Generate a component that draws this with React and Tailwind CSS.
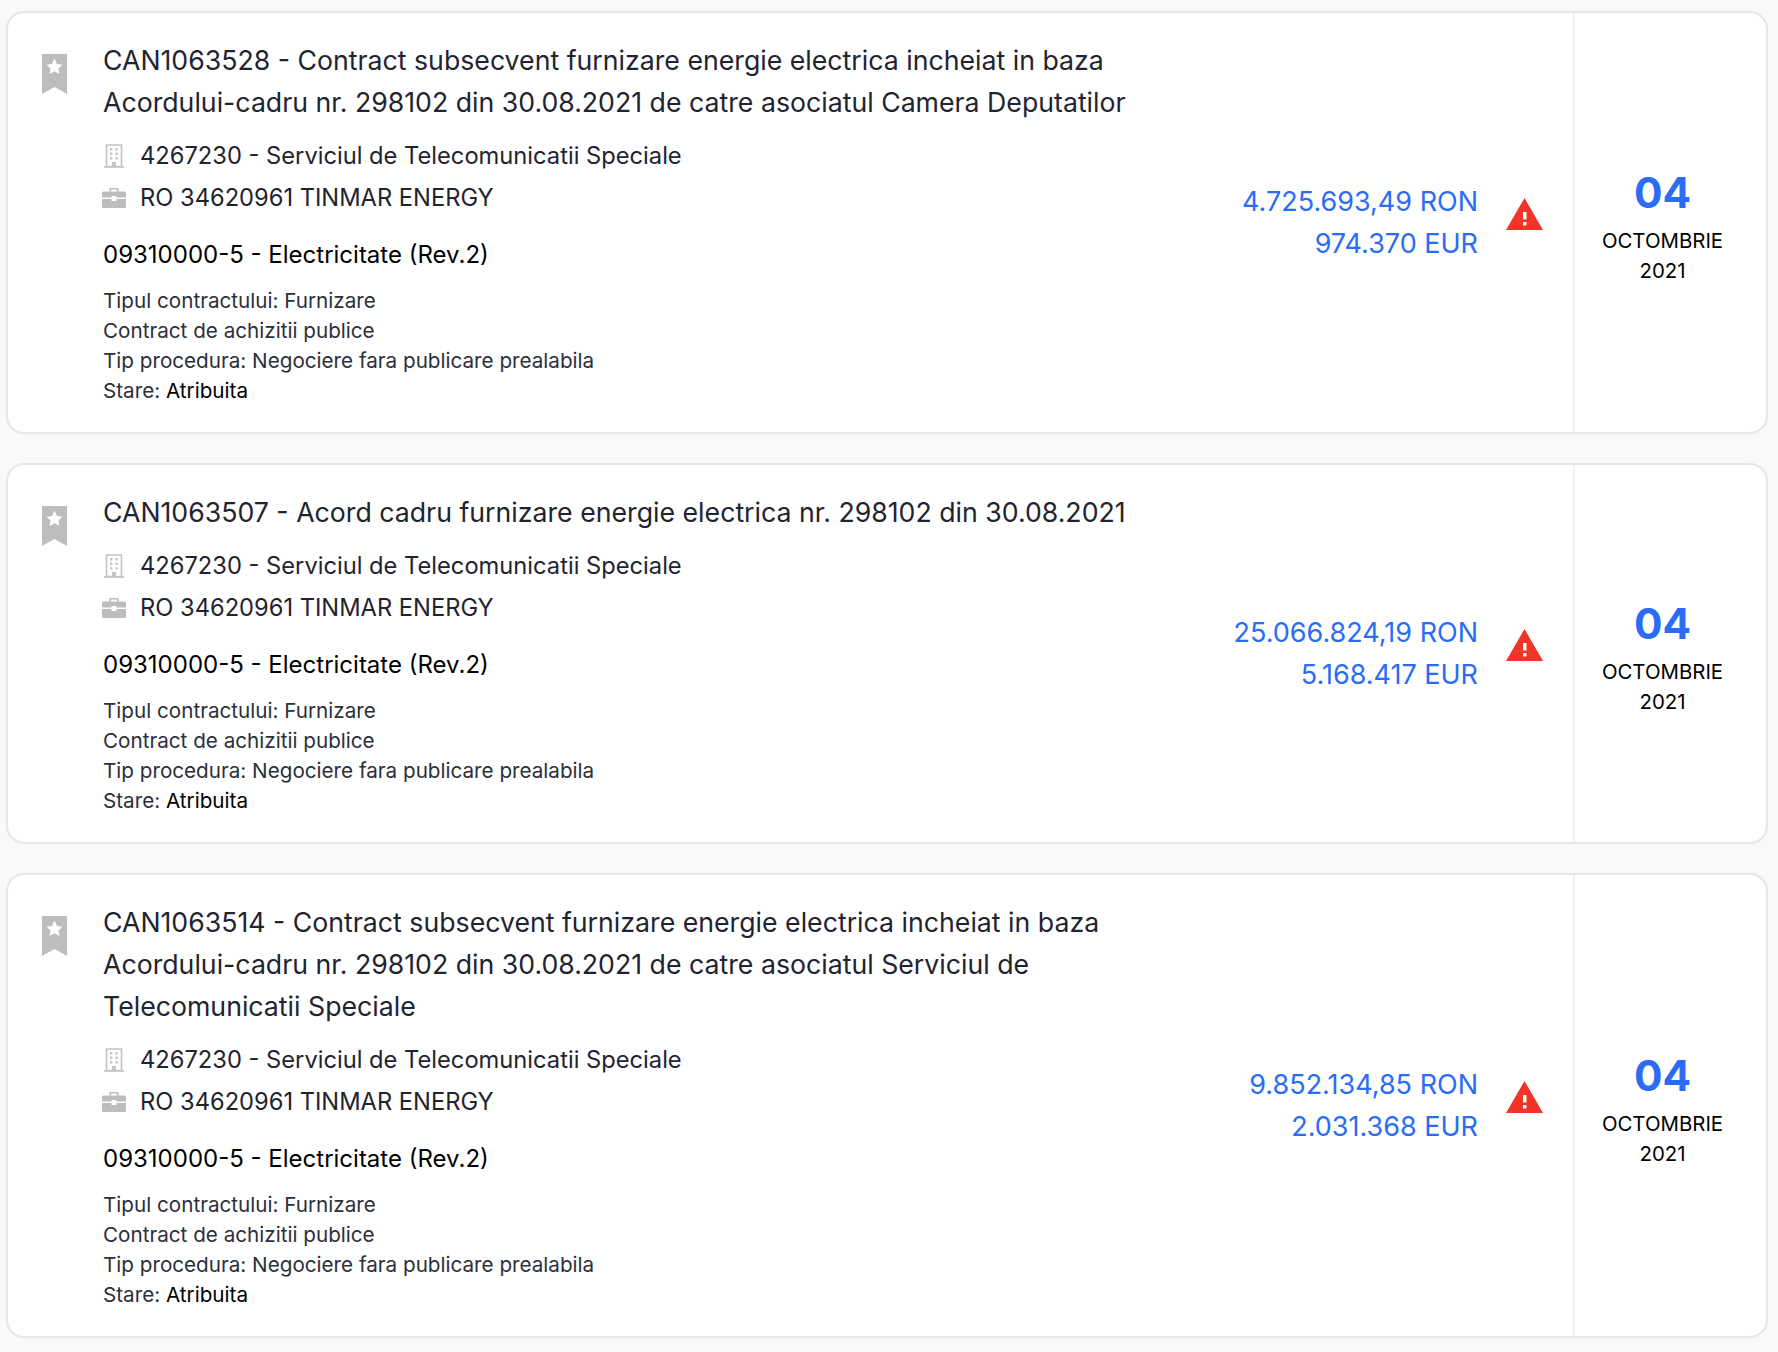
const Bookmark = () => (
  <svg width="25" height="40" viewBox="0 0 25 40" className="block">
    <path d="M0 0H25V40L12.5 33L0 40Z" fill="#bdbdbd" />
    <path d="M12.5 4.5L15 10L20.500 10.700L16.400 14.500L17.500 20L12.500 17.300L7.500 20L8.600 14.500L4.500 10.700L10 10Z" fill="#fff" />
  </svg>
);

const Building = () => (
  <svg width="20" height="24" viewBox="0 0 20 24" className="block">
    <path d="M2.5 1H17.5V22.5H2.5Z" fill="none" stroke="#c4c4c4" strokeWidth="1.6" />
    <path d="M0 23H20" stroke="#c4c4c4" strokeWidth="1.6" />
    <path d="M6 4h2.4v2.4H6zM11.4 4h2.4v2.4h-2.4zM6 8.6h2.4V11H6zM11.4 8.6h2.4V11h-2.4zM6 13.2h2.4v2.4H6zM11.4 13.2h2.4v2.4h-2.4z" fill="#c4c4c4" />
    <path d="M8 18h4v4.5H8z" fill="#c4c4c4" />
  </svg>
);

const Briefcase = () => (
  <svg width="24" height="20" viewBox="0 0 24 20" className="block">
    <path d="M8 3.5V2a1.5 1.5 0 0 1 1.5-1.5h5A1.5 1.5 0 0 1 16 2v1.5" fill="none" stroke="#bdbdbd" strokeWidth="1.8" />
    <path d="M1.5 3.5H22.500A1.5 1.5 0 0 1 24 5V9.500H14.500V8H9.500V9.500H0V5A1.500 1.500 0 0 1 1.500 3.500Z" fill="#bdbdbd" />
    <path d="M0 11H9.500V13H14.500V11H24V18.500A1.500 1.500 0 0 1 22.500 20H1.500A1.500 1.500 0 0 1 0 18.500Z" fill="#bdbdbd" />
  </svg>
);

const Warning = () => (
  <svg width="37" height="32" viewBox="0 0 37 32" className="block">
    <path d="M18.500 0L37 32H0Z" fill="#f03427" />
    <rect x="17" y="14" width="3.500" height="7.500" fill="#fff" />
    <rect x="17" y="24" width="3.500" height="3.500" fill="#fff" />
  </svg>
);

const items = [
  {
    title: "CAN1063528 - Contract subsecvent furnizare energie electrica incheiat in baza Acordului-cadru nr. 298102 din 30.08.2021 de catre asociatul Camera Deputatilor",
    ron: "4.725.693,49 RON",
    eur: "974.370 EUR",
  },
  {
    title: "CAN1063507 - Acord cadru furnizare energie electrica nr. 298102 din 30.08.2021",
    ron: "25.066.824,19 RON",
    eur: "5.168.417 EUR",
  },
  {
    title: "CAN1063514 - Contract subsecvent furnizare energie electrica incheiat in baza Acordului-cadru nr. 298102 din 30.08.2021 de catre asociatul Serviciul de Telecomunicatii Speciale",
    ron: "9.852.134,85 RON",
    eur: "2.031.368 EUR",
  },
];

function Card({ item }) {
  return (
    <div className="flex rounded-[18px] border-2 border-[#e6e6eb] bg-white">
      <div className="flex-1 flex items-center min-w-0">
        <div className="w-[95px] pl-[34px] self-start pt-[41px] shrink-0">
          <Bookmark />
        </div>
        <div className="w-[1040px] shrink-0 pt-[26px] pb-[26px]">
          <div className="text-[26.7px] leading-[42px] text-[#1f2430]">{item.title}</div>
          <div className="mt-[12px] flex items-center h-[42px]">
            <div className="w-[37px] pl-[1px]"><Building /></div>
            <span className="text-[23.7px] text-[#1f2430]">4267230 - Serviciul de Telecomunicatii Speciale</span>
          </div>
          <div className="flex items-center h-[42px]">
            <div className="w-[38px] -ml-[1px]"><Briefcase /></div>
            <span className="text-[23.7px] text-[#1f2430]">RO 34620961 TINMAR ENERGY</span>
          </div>
          <div className="mt-[15px] text-[24px] leading-[42px] text-black">09310000-5 - Electricitate (Rev.2)</div>
          <div className="mt-[10px] text-[20.67px] leading-[30px] text-[#2c303a]">
            <div>Tipul contractului: Furnizare</div>
            <div>Contract de achizitii publice</div>
            <div>Tip procedura: Negociere fara publicare prealabila</div>
            <div>Stare: <span className="text-black">Atribuita</span></div>
          </div>
        </div>
        <div className="flex-1 text-right text-[27px] leading-[42px] text-[#2b6cf6]">
          <div>{item.ron}</div>
          <div>{item.eur}</div>
        </div>
        <div className="w-[95px] shrink-0 flex justify-center pr-[2px] mb-[17px]">
          <Warning />
        </div>
      </div>
      <div className="w-[193px] shrink-0 border-l-2 border-[#f0f0f4] flex flex-col items-center justify-center pt-[9px] pr-[16px] text-black">
        <div className="text-[42.3px] leading-[50px] font-bold text-[#2b6cf6]">04</div>
        <div className="text-[20.4px] leading-[30px] mt-[8px]">OCTOMBRIE</div>
        <div className="text-[20.4px] leading-[30px]">2021</div>
      </div>
    </div>
  );
}

export default function App() {
  return (
    <div className="min-h-[1352px] bg-[#f9f9fa] pt-[11px] pl-[6px] pr-[10px] flex flex-col gap-[29px] font-['Inter',sans-serif]">
      {items.map((item) => (
        <Card key={item.title} item={item} />
      ))}
    </div>
  );
}
